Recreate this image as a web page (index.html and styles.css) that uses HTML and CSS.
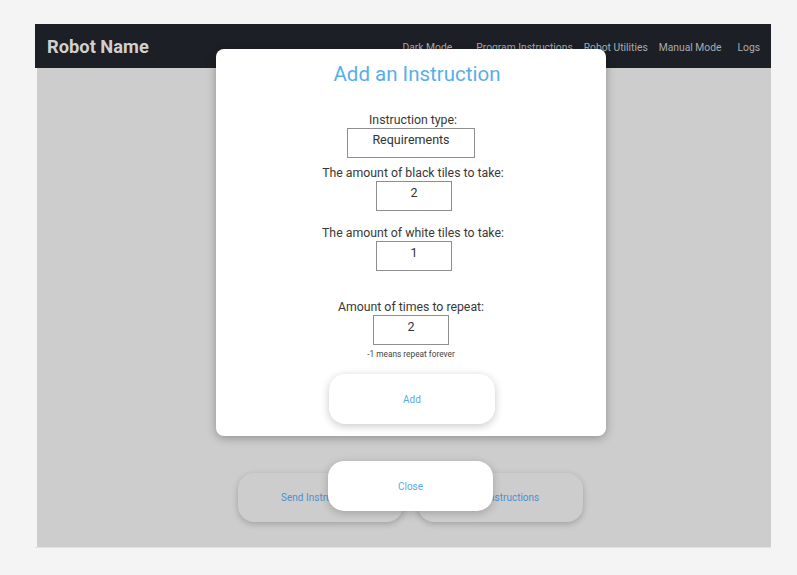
FILE: index.html
```html
<!DOCTYPE html>
<html>
<head>
<meta charset="utf-8">
<link rel="stylesheet" href="styles.css">
</head>
<body>
<div class="app">
  <nav class="navbar">
    <div class="brand">Robot Name</div>
    <div class="links">
      <span class="link dark">Dark Mode</span>
      <span class="link">Program Instructions</span>
      <span class="link">Robot Utilities</span>
      <span class="link">Manual Mode</span>
      <span class="link logs">Logs</span>
    </div>
  </nav>
  <main class="content">
    <div class="actions">
      <div class="btn bg">Send Instructions</div>
      <div class="btn bg">Clear Instructions</div>
    </div>
  </main>
</div>

<div class="modal">
  <h2 class="title">Add an Instruction</h2>
  <div class="field f1">
    <label>Instruction type:</label>
    <div class="input wide">Requirements</div>
  </div>
  <div class="field f2">
    <label>The amount of black tiles to take:</label>
    <div class="input shift">2</div>
  </div>
  <div class="field f3">
    <label>The amount of white tiles to take:</label>
    <div class="input shift">1</div>
  </div>
  <div class="field f4">
    <label>Amount of times to repeat:</label>
    <div class="input">2</div>
    <div class="hint">-1 means repeat forever</div>
  </div>
  <div class="btn white add">Add</div>
</div>
<div class="btn white close">Close</div>
</body>
</html>
```
FILE: styles.css
```css
html, body {
  margin: 0;
  padding: 0;
}
body {
  background: #f4f4f4;
  font-family: Roboto, "Liberation Sans", sans-serif;
  width: 797px;
  height: 575px;
  overflow: hidden;
  position: relative;
}
.app {
  position: relative;
  margin: 24px 0 0 35px;
  width: 736px;
  height: 524px;
  display: flex;
  flex-direction: column;
  border-bottom: 1px solid #e2e2e2;
  box-sizing: border-box;
}
.navbar {
  height: 44px;
  background: #1c1f25;
  display: flex;
  align-items: center;
  justify-content: space-between;
  padding: 0 11px 0 12px;
  flex: none;
}
.brand {
  color: #d0d0d0;
  font-weight: 700;
  font-size: 18.3px;
  margin-top: 1px;
}
.links {
  display: flex;
  align-items: center;
  font-size: 10.3px;
  color: #a9acb0;
  margin-top: 2px;
}
.link { margin-left: 11px; }
.link.dark { margin-right: 13px; }
.link.logs { margin-left: 16px; }
.content {
  flex: 1;
  background: #cdcdcd;
  margin-left: 2px;
  display: flex;
  align-items: flex-end;
  justify-content: center;
  padding: 0 0 25px 12px;
}
.actions {
  display: flex;
  gap: 15px;
}
.btn {
  width: 165px;
  height: 49px;
  border-radius: 16px;
  display: flex;
  align-items: center;
  justify-content: center;
  font-size: 10px;
  color: #4d8fd0;
}
.btn.bg {
  background: #cdcdcd;
  box-shadow: 0 2px 6px rgba(0,0,0,0.22);
}
.btn.white {
  background: #fff;
  color: #5aa9e6;
  box-shadow: 0 2px 8px rgba(0,0,0,0.22);
}
.modal {
  position: absolute;
  left: 216px;
  top: 49px;
  width: 390px;
  height: 387px;
  background: #fff;
  border-radius: 8px;
  box-shadow: 0 2px 10px rgba(0,0,0,0.3);
  display: flex;
  flex-direction: column;
  align-items: center;
  box-sizing: border-box;
  padding-top: 13px;
}
.title {
  margin: 0 0 0 12px;
  font-weight: 400;
  font-size: 20.5px;
  color: #5aaee8;
  line-height: 24px;
}
.field {
  display: flex;
  flex-direction: column;
  align-items: center;
  color: #383838;
  font-size: 12.3px;
  margin-left: 4px;
}
.field label { line-height: 15px; }
.f1 { margin-top: 27px; }
.f2 { margin-top: 8px; }
.f3 { margin-top: 15px; }
.f4 { margin-top: 29px; margin-left: 0; }
.input {
  width: 76px;
  height: 30px;
  border: 1px solid #8e8e8e;
  box-sizing: border-box;
  display: flex;
  align-items: center;
  justify-content: center;
  margin-top: 0;
  padding-bottom: 7px;
  font-size: 12.5px;
  color: #333;
}
.input.wide { width: 128px; margin-left: -4px; }
.input.shift { margin-left: 2px; }
.hint {
  font-size: 8.3px;
  color: #444;
  margin-top: 4px;
}
.add {
  margin-top: 15px;
  margin-left: 2px;
  height: 50px;
  width: 166px;
}
.close {
  position: absolute;
  left: 328px;
  top: 461px;
  height: 50px;
}
```
